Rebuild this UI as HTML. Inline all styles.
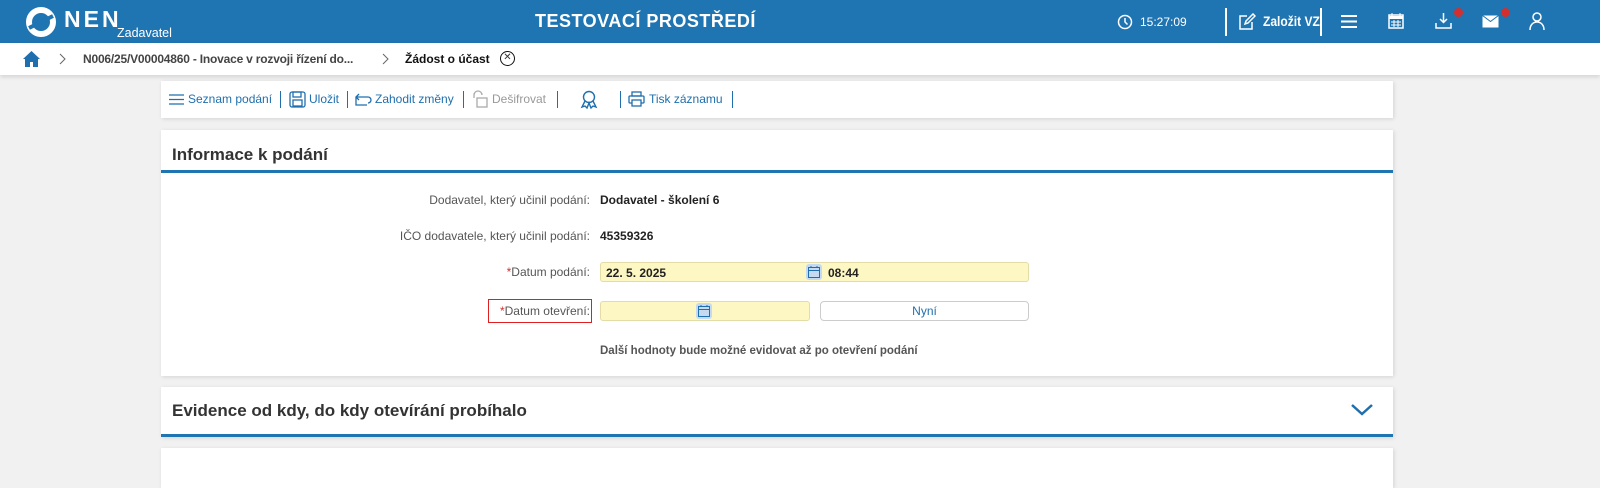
<!DOCTYPE html>
<html><head><meta charset="utf-8"><style>
*{box-sizing:border-box;margin:0;padding:0}
body{width:1600px;height:475px;overflow:hidden;background:#f1f1f1;font-family:"Liberation Sans",Arial,sans-serif;color:#333;position:relative}
.hdr{position:absolute;left:0;top:0;width:1600px;height:43px;background:#1f74b2;color:#fff}
.ab{position:absolute}
.bc{position:absolute;top:43px;left:0;width:1600px;height:32px;background:#fff;box-shadow:0 2px 4px rgba(0,0,0,.12);font-size:12px;font-weight:bold}
.card{position:absolute;left:161px;width:1232px;background:#fff;box-shadow:1px 1px 4px rgba(0,0,0,.12)}
.tb{font-size:12px;color:#1f6fae}
.sep{position:absolute;width:1px;height:17px;background:#1f6fae;top:10px}
.lbl{position:absolute;right:1010px;font-size:12px;color:#555;text-align:right;white-space:nowrap}
.val{position:absolute;left:600px;font-size:12px;font-weight:bold;color:#222}
.inp{position:absolute;background:#fdf7c4;border:1px solid #e3dca6;border-radius:3px;height:20px}
.cal{position:absolute;width:16px;height:16px;background:#c5daf0;border-radius:3px;top:1px}
</style></head><body>
<div class="hdr">
 <svg class="ab" style="left:25px;top:6px" width="32" height="32" viewBox="0 0 32 32"><circle cx="16" cy="16" r="12" fill="none" stroke="#fff" stroke-width="6"/><path d="M4 22 L28 10" stroke="#1f74b2" stroke-width="4"/></svg>
 <div class="ab" style="left:64px;top:6px;font-size:23px;font-weight:bold;letter-spacing:3px">NEN</div>
 <div class="ab" style="left:117px;top:26px;font-size:12.5px">Zadavatel</div>
 <div class="ab" style="left:535px;top:11px;font-size:18px;font-weight:bold;letter-spacing:.5px">TESTOVACÍ PROSTŘEDÍ</div>
 <svg class="ab" style="left:1117px;top:14px" width="16" height="16" viewBox="0 0 16 16" fill="none" stroke="#fff" stroke-width="1.5"><circle cx="8" cy="8" r="6.5"/><path d="M8 4v4l2.5 2.5"/></svg>
 <div class="ab" style="left:1140px;top:15px;font-size:12px">15:27:09</div>
 <div class="ab" style="left:1225px;top:8px;width:2px;height:28px;background:#fff"></div>
 <svg class="ab" style="left:1238px;top:13px" width="18" height="17" viewBox="0 0 18 17" fill="none" stroke="#fff" stroke-width="1.5"><path d="M9 3H2v13h12V9"/><path d="M7 11l1-3 7-7 2 2-7 7z"/></svg>
 <div class="ab" style="left:1263px;top:13px;font-size:14px;font-weight:bold;transform:scaleX(.86);transform-origin:left;white-space:nowrap">Založit VZ</div>
 <div class="ab" style="left:1320px;top:8px;width:2px;height:28px;background:#fff"></div>
 <svg class="ab" style="left:1341px;top:14px" width="16" height="15"><path d="M0 2h16M0 7.5h16M0 13h16" stroke="#fff" stroke-width="2"/></svg>
 <svg class="ab" style="left:1388px;top:13px" width="16" height="16" viewBox="0 0 16 16"><rect x="1" y="2" width="14" height="13" fill="none" stroke="#fff" stroke-width="1.5"/><rect x="1" y="3" width="14" height="3" fill="#fff"/><path d="M4 0v3M12 0v3M3 9h10M3 12h10M6 7v7M10 7v7" stroke="#fff"/></svg>
 <svg class="ab" style="left:1435px;top:13px" width="17" height="16" viewBox="0 0 17 16" fill="none" stroke="#fff" stroke-width="1.5"><path d="M8.5 0v9M5 6l3.5 3.5L12 6M1 10v5h15v-5"/></svg>
 <div class="ab" style="left:1454px;top:8px;width:9px;height:9px;border-radius:50%;background:#d32f2f"></div>
 <svg class="ab" style="left:1482px;top:15px" width="17" height="13"><rect x=".5" y=".5" width="16" height="12" fill="#fff"/><path d="M.5 .5l8 6 8-6" stroke="#1f74b2" fill="none"/></svg>
 <div class="ab" style="left:1501px;top:8px;width:9px;height:9px;border-radius:50%;background:#d32f2f"></div>
 <svg class="ab" style="left:1529px;top:12px" width="16" height="18" fill="none" stroke="#fff" stroke-width="1.5"><circle cx="8" cy="5" r="4"/><path d="M1 18c0-5 3-8 7-8s7 3 7 8"/></svg>
</div>
<div class="bc">
 <svg class="ab" style="left:23px;top:8px" width="17" height="16" viewBox="0 0 17 16"><path d="M8.5 0L0 8h2v8h5v-5h3v5h5V8h2z" fill="#1f6fae"/></svg>
 <svg class="ab" style="left:59px;top:10px" width="7" height="12"><path d="M1 1l5 5-5 5" stroke="#666" fill="none"/></svg>
 <div class="ab" style="left:83px;top:9px;color:#444;letter-spacing:-.2px">N006/25/V00004860 - Inovace v rozvoji řízení do...</div>
 <svg class="ab" style="left:382px;top:10px" width="7" height="12"><path d="M1 1l5 5-5 5" stroke="#666" fill="none"/></svg>
 <div class="ab" style="left:405px;top:9px;color:#111">Žádost o účast</div>
 <div class="ab" style="left:500px;top:8px;width:15px;height:15px;border:1.5px solid #111;border-radius:50%;font-size:10px;line-height:12px;text-align:center;font-weight:normal">✕</div>
</div>
<div class="card tb" style="top:81px;height:37px">
 <svg class="ab" style="left:8px;top:13px" width="15" height="11"><path d="M0 1h15M0 5.5h15M0 10h15" stroke="#1f6fae" stroke-width="1.3"/></svg>
 <div class="ab" style="left:27px;top:11px">Seznam podání</div><div class="sep" style="left:119px"></div>
 <svg class="ab" style="left:128px;top:10px" width="17" height="17" fill="none" stroke="#1f6fae" stroke-width="1.3"><rect x="1" y="1" width="15" height="15" rx="2"/><rect x="4" y="1" width="8" height="5"/><rect x="4" y="9" width="9" height="6"/></svg>
 <div class="ab" style="left:148px;top:11px">Uložit</div><div class="sep" style="left:186px"></div>
 <svg class="ab" style="left:194px;top:12px" width="17" height="13" fill="none" stroke="#1f6fae" stroke-width="1.3"><path d="M1 4h12a3 3 0 010 6M1 4v8h11M4 1L1 4l3 3"/></svg>
 <div class="ab" style="left:214px;top:11px">Zahodit změny</div><div class="sep" style="left:302px"></div>
 <svg class="ab" style="left:311px;top:9px" width="16" height="18" fill="none" stroke="#aaa" stroke-width="1.3"><path d="M2 8V5a4 4 0 018 0"/><rect x="5" y="8" width="10" height="9"/></svg>
 <div class="ab" style="left:331px;top:11px;color:#999">Dešifrovat</div><div class="sep" style="left:396px"></div>
 <svg class="ab" style="left:419px;top:9px" width="18" height="19" fill="none" stroke="#1f6fae" stroke-width="1.4"><circle cx="9" cy="7" r="5.5"/><path d="M5 11l-3 6 3-1 2 2 2-5 2 5 2-2 3 1-3-6"/></svg>
 <div class="sep" style="left:459px"></div>
 <svg class="ab" style="left:467px;top:10px" width="17" height="16" fill="none" stroke="#1f6fae" stroke-width="1.3"><rect x="4" y="1" width="9" height="4"/><rect x="1" y="5" width="15" height="7" rx="1"/><rect x="4" y="9" width="9" height="6" fill="#fff"/></svg>
 <div class="ab" style="left:488px;top:11px">Tisk záznamu</div><div class="sep" style="left:571px"></div>
</div>
<div class="card" style="top:130px;height:246px">
 <div class="ab" style="left:11px;top:15px;font-size:17px;font-weight:bold;color:#333">Informace k podání</div>
 <div class="ab" style="left:0;top:40px;width:1232px;height:3px;background:#1f74b2"></div>
</div>
<div class="lbl" style="top:193px">Dodavatel, který učinil podání:</div>
<div class="val" style="top:193px">Dodavatel - školení 6</div>
<div class="lbl" style="top:229px">IČO dodavatele, který učinil podání:</div>
<div class="val" style="top:229px">45359326</div>
<div class="lbl" style="top:265px"><span style="color:#d32f2f">*</span>Datum podání:</div>
<div class="inp" style="left:600px;top:262px;width:429px"><span class="ab" style="left:5px;top:3px;font-size:12px;font-weight:bold;color:#222">22. 5. 2025</span><div class="cal" style="left:205px"></div><svg class="ab" style="left:207px;top:3px" width="12" height="12" fill="none" stroke="#1f6fae"><rect x=".5" y="1.5" width="11" height="10"/><path d="M.5 4.5h11M3 0v2M9 0v2"/></svg><span class="ab" style="left:227px;top:3px;font-size:12px;font-weight:bold;color:#222">08:44</span></div>
<div class="ab" style="left:488px;top:299px;width:104px;height:24px;border:1px solid #e02020"></div>
<div class="lbl" style="top:304px"><span style="color:#d32f2f">*</span>Datum otevření:</div>
<div class="inp" style="left:600px;top:301px;width:210px"><div class="cal" style="left:95px"></div><svg class="ab" style="left:97px;top:3px" width="12" height="12" fill="none" stroke="#1f6fae"><rect x=".5" y="1.5" width="11" height="10"/><path d="M.5 4.5h11M3 0v2M9 0v2"/></svg></div>
<div class="ab" style="left:820px;top:301px;width:209px;height:20px;border:1px solid #ccc;border-radius:4px;background:#fff;text-align:center;font-size:12px;color:#1f6fae;line-height:18px">Nyní</div>
<div class="ab" style="left:600px;top:345px;font-size:11.5px;font-weight:bold;color:#555">Další hodnoty bude možné evidovat až po otevření podání</div>
<div class="card" style="top:387px;height:50px">
 <div class="ab" style="left:11px;top:14px;font-size:17px;font-weight:bold;color:#333">Evidence od kdy, do kdy otevírání probíhalo</div>
 <svg class="ab" style="left:1190px;top:17px" width="22" height="12"><path d="M1 1l10 9 10-9" stroke="#1f6fae" stroke-width="2.5" fill="none"/></svg>
 <div class="ab" style="left:0;top:47px;width:1232px;height:3px;background:#1f74b2"></div>
</div>
<div class="card" style="top:448px;height:40px"></div>
</body></html>
